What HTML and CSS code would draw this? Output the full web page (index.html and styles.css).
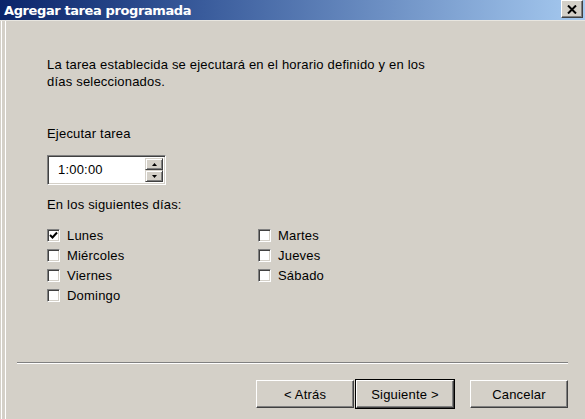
FILE: index.html
```html
<!DOCTYPE html>
<html lang="es">
<head>
<meta charset="utf-8">
<title>Agregar tarea programada</title>
<link rel="stylesheet" href="styles.css">
</head>
<body>
<div class="window">
  <div class="titlebar">
    <span class="title">Agregar tarea programada</span>
    <button class="close" aria-label="Cerrar">
      <svg width="10" height="9" viewBox="0 0 10 9"><path d="M1 0.5 L9 8.5 M9 0.5 L1 8.5" stroke="#000" stroke-width="2" fill="none"/></svg>
    </button>
  </div>
  <div class="frame">
    <div class="content">
      <p class="desc">La tarea establecida se ejecutará en el horario definido y en los<br>días seleccionados.</p>
      <div class="label">Ejecutar tarea</div>
      <div class="spinner">
        <div class="field">1:00:00</div>
        <div class="spin">
          <div class="spinbtn"><svg width="5" height="3" viewBox="0 0 5 3"><path d="M2.5 0 L5 3 L0 3 Z" fill="#000"/></svg></div>
          <div class="spinbtn"><svg width="5" height="3" viewBox="0 0 5 3"><path d="M0 0 L5 0 L2.5 3 Z" fill="#000"/></svg></div>
        </div>
      </div>
      <div class="label days-label">En los siguientes días:</div>
      <div class="days">
        <label class="day"><span class="box checked"><svg width="9" height="9" viewBox="0 0 9 9"><path d="M1 4 L3.5 6.5 L8 1.5" stroke="#000" stroke-width="2" fill="none"/></svg></span>Lunes</label>
        <label class="day"><span class="box"></span>Martes</label>
        <label class="day"><span class="box"></span>Miércoles</label>
        <label class="day"><span class="box"></span>Jueves</label>
        <label class="day"><span class="box"></span>Viernes</label>
        <label class="day"><span class="box"></span>Sábado</label>
        <label class="day"><span class="box"></span>Domingo</label>
      </div>
    </div>
    <div class="separator"></div>
    <div class="buttons">
      <button class="btn">&lt; Atrás</button>
      <button class="btn default">Siguiente &gt;</button>
      <button class="btn cancel">Cancelar</button>
    </div>
  </div>
</div>
</body>
</html>
```
FILE: styles.css
```css
* { box-sizing: border-box; }
html, body { margin: 0; padding: 0; }
body {
  width: 585px;
  height: 419px;
  overflow: hidden;
  background: #d4d0c8;
  font-family: "Liberation Sans", Arial, sans-serif;
  font-size: 13px;
  letter-spacing: 0.2px;
  color: #000;
}
.window {
  width: 585px;
  height: 419px;
  display: flex;
  flex-direction: column;
  background: #d4d0c8;
}
.titlebar {
  height: 21px;
  flex: none;
  display: flex;
  align-items: center;
  justify-content: space-between;
  background: linear-gradient(to right, #0a246a 0%, #3a5c9c 35%, #a6caf0 100%);
  border-bottom: 1px solid #e8e6e0;
  padding: 0 2px 0 4px;
}
.title {
  color: #fff;
  font-family: "DejaVu Sans", Verdana, sans-serif;
  font-weight: bold;
  font-size: 13px;
  letter-spacing: -0.4px;
}
.close {
  width: 22px;
  height: 18px;
  margin-top: -2px;
  padding: 0;
  background: #d4d0c8;
  border: 1px solid;
  border-color: #fff #404040 #404040 #fff;
  box-shadow: inset -1px -1px 0 #808080;
  display: flex;
  align-items: center;
  justify-content: center;
}
.frame {
  flex: 1;
  display: flex;
  flex-direction: column;
  border-left: 1px solid #fff;
  margin-left: 1px;
  box-shadow: inset 3px 0 0 #d4d0c8, inset 4px 0 0 #fff;
  padding-left: 15px;
  padding-right: 17px;
}
.content {
  flex: 1;
  padding-left: 30px;
  padding-top: 35px;
}
.desc {
  margin: 0;
  line-height: 17px;
}
.label {
  line-height: 17px;
  margin-top: 35px;
}
.spinner {
  margin-top: 13px;
  width: 119px;
  height: 30px;
  display: flex;
  border: 1px solid;
  border-color: #808080 #fff #fff #808080;
  box-shadow: inset 1px 1px 0 #404040, inset -1px -1px 0 #d4d0c8;
  background: #fff;
  padding: 2px;
}
.field {
  flex: 1;
  padding-left: 8px;
  line-height: 24px;
}
.spin {
  width: 18px;
  display: flex;
  flex-direction: column;
}
.spinbtn {
  flex: 1;
  background: #d4d0c8;
  border: 1px solid;
  border-color: #d4d0c8 #404040 #404040 #d4d0c8;
  box-shadow: inset 1px 1px 0 #fff, inset -1px -1px 0 #808080;
  display: flex;
  align-items: center;
  justify-content: center;
}
.days-label {
  margin-top: 11px;
}
.days {
  margin-top: 12px;
  display: grid;
  grid-template-columns: 211px auto;
  grid-auto-rows: 20px;
}
.day {
  display: flex;
  align-items: center;
  gap: 7px;
}
.box {
  width: 13px;
  height: 13px;
  background: #fff;
  border: 1px solid;
  border-color: #808080 #fff #fff #808080;
  box-shadow: inset 1px 1px 0 #404040, inset -1px -1px 0 #d4d0c8;
  display: flex;
  align-items: center;
  justify-content: center;
}
.separator {
  height: 2px;
  border-top: 1px solid #808080;
  border-bottom: 1px solid #fff;
  margin-bottom: 16px;
}
.buttons {
  display: flex;
  justify-content: flex-end;
  margin-bottom: 11px;
}
.btn {
  width: 98px;
  height: 28px;
  font-family: "Liberation Sans", Arial, sans-serif;
  font-size: 13px;
  letter-spacing: 0.2px;
  color: #000;
  background: #d4d0c8;
  border: 1px solid;
  border-color: #fff #404040 #404040 #fff;
  box-shadow: inset -1px -1px 0 #808080;
  padding: 0;
}
.btn.default {
  margin-left: 2px;
  outline: 1px solid #000;
  outline-offset: 0;
}
.btn.cancel {
  margin-left: 16px;
}
```
